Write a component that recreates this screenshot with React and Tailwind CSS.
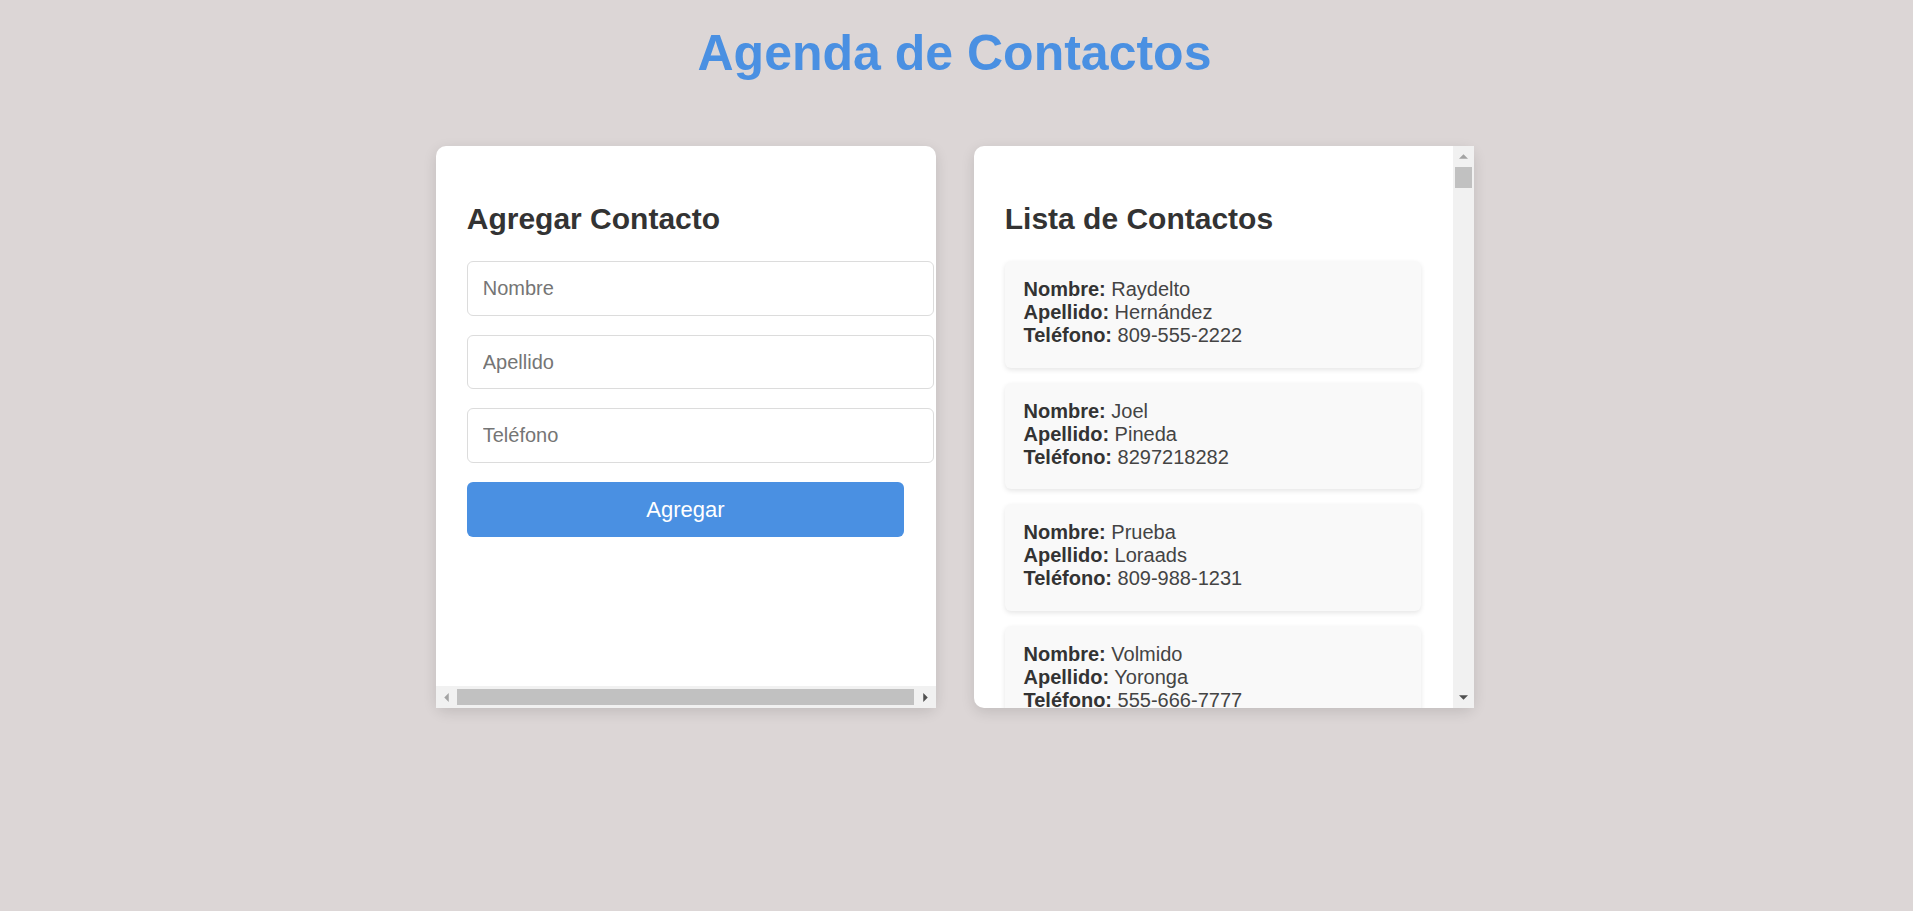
import React from "react";

const contacts = [
  { nombre: "Raydelto", apellido: "Hernández", telefono: "809-555-2222" },
  { nombre: "Joel", apellido: "Pineda", telefono: "8297218282" },
  { nombre: "Prueba", apellido: "Loraads", telefono: "809-988-1231" },
  { nombre: "Volmido", apellido: "Yoronga", telefono: "555-666-7777" },
  { nombre: "Ana", apellido: "Martínez", telefono: "809-111-2233" },
];

function Arrow({ dir, color }) {
  const pts = {
    left: "4.5,0 4.5,9 0,4.5",
    right: "0,0 0,9 4.5,4.5",
    up: "0,4.5 9,4.5 4.5,0",
    down: "0,0 9,0 4.5,4.5",
  }[dir];
  const horiz = dir === "left" || dir === "right";
  return (
    <svg
      width={horiz ? 5 : 9}
      height={horiz ? 9 : 5}
      viewBox={horiz ? "0 0 4.5 9" : "0 0 9 4.5"}
      className="block"
    >
      <polygon points={pts} fill={color} />
    </svg>
  );
}

export default function App() {
  return (
    <div className="min-h-screen bg-[#dcd6d6] pt-[25px] pr-[4px] font-['Liberation_Sans',Arial,sans-serif]">
      <h1 className="text-center text-[50px] leading-[57.5px] font-bold text-[#4a90e2]">
        Agenda de Contactos
      </h1>

      <div className="mt-[63.5px] flex justify-center gap-[38px]">
        {/* Left card */}
        <div className="flex h-[562px] w-[500px] flex-col rounded-[10px] bg-white shadow-[0_4px_14px_rgba(0,0,0,0.12)]">
          <div className="flex-1 overflow-hidden rounded-t-[10px] px-[31.25px] pt-[31.25px]">
            <h2 className="mt-[24.5px] mb-[25.2px] text-[30px] leading-[34.5px] font-bold text-[#333]">
              Agregar Contacto
            </h2>
            <input
              type="text"
              placeholder="Nombre"
              className="mb-[19px] block h-[54.5px] w-[calc(100%+30px)] rounded-[6px] border border-[#dcdcdc] px-[15px] text-[20px] text-[#333] outline-none placeholder:text-[#757575]"
            />
            <input
              type="text"
              placeholder="Apellido"
              className="mb-[19px] block h-[54.5px] w-[calc(100%+30px)] rounded-[6px] border border-[#dcdcdc] px-[15px] text-[20px] text-[#333] outline-none placeholder:text-[#757575]"
            />
            <input
              type="text"
              placeholder="Teléfono"
              className="mb-[19px] block h-[54.5px] w-[calc(100%+30px)] rounded-[6px] border border-[#dcdcdc] px-[15px] text-[20px] text-[#333] outline-none placeholder:text-[#757575]"
            />
            <button className="block h-[55.5px] w-full rounded-[6px] bg-[#4a90e2] text-[22px] text-white">
              Agregar
            </button>
          </div>
          {/* horizontal scrollbar */}
          <div className="flex h-[22px] items-stretch bg-[#f1f1f1]">
            <div className="flex w-[21px] items-center justify-center">
              <Arrow dir="left" color="#a3a3a3" />
            </div>
            <div className="flex flex-1 items-center">
              <div className="h-[16.5px] w-[457px] bg-[#c1c1c1]" />
            </div>
            <div className="flex w-[21px] items-center justify-center">
              <Arrow dir="right" color="#505050" />
            </div>
          </div>
        </div>

        {/* Right card */}
        <div className="flex h-[562px] w-[500px] flex-row rounded-[10px] bg-white shadow-[0_4px_14px_rgba(0,0,0,0.12)]">
          <div className="flex-1 overflow-hidden rounded-l-[10px] px-[31.25px] pt-[31.25px]">
            <h2 className="mt-[24.5px] mb-[25.2px] text-[30px] leading-[34.5px] font-bold text-[#333]">
              Lista de Contactos
            </h2>
            <div className="flex flex-col gap-[15px]">
              {contacts.map((c, i) => (
                <div
                  key={i}
                  className="rounded-[6px] bg-[#f9f9f9] px-[18.75px] pt-[17px] pb-[20.5px] text-[20px] leading-[23px] text-[#444] shadow-[0_2px_5px_rgba(0,0,0,0.1)]"
                >
                  <div>
                    <strong className="text-[#333]">Nombre:</strong> {c.nombre}
                  </div>
                  <div>
                    <strong className="text-[#333]">Apellido:</strong> {c.apellido}
                  </div>
                  <div>
                    <strong className="text-[#333]">Teléfono:</strong> {c.telefono}
                  </div>
                </div>
              ))}
            </div>
          </div>
          {/* vertical scrollbar */}
          <div className="flex w-[21px] flex-col bg-[#f1f1f1]">
            <div className="flex h-[21px] items-center justify-center">
              <Arrow dir="up" color="#a3a3a3" />
            </div>
            <div className="flex flex-1 flex-col items-center">
              <div className="h-[21px] w-[17px] bg-[#c1c1c1]" />
            </div>
            <div className="flex h-[21px] items-center justify-center">
              <Arrow dir="down" color="#505050" />
            </div>
          </div>
        </div>
      </div>
    </div>
  );
}
